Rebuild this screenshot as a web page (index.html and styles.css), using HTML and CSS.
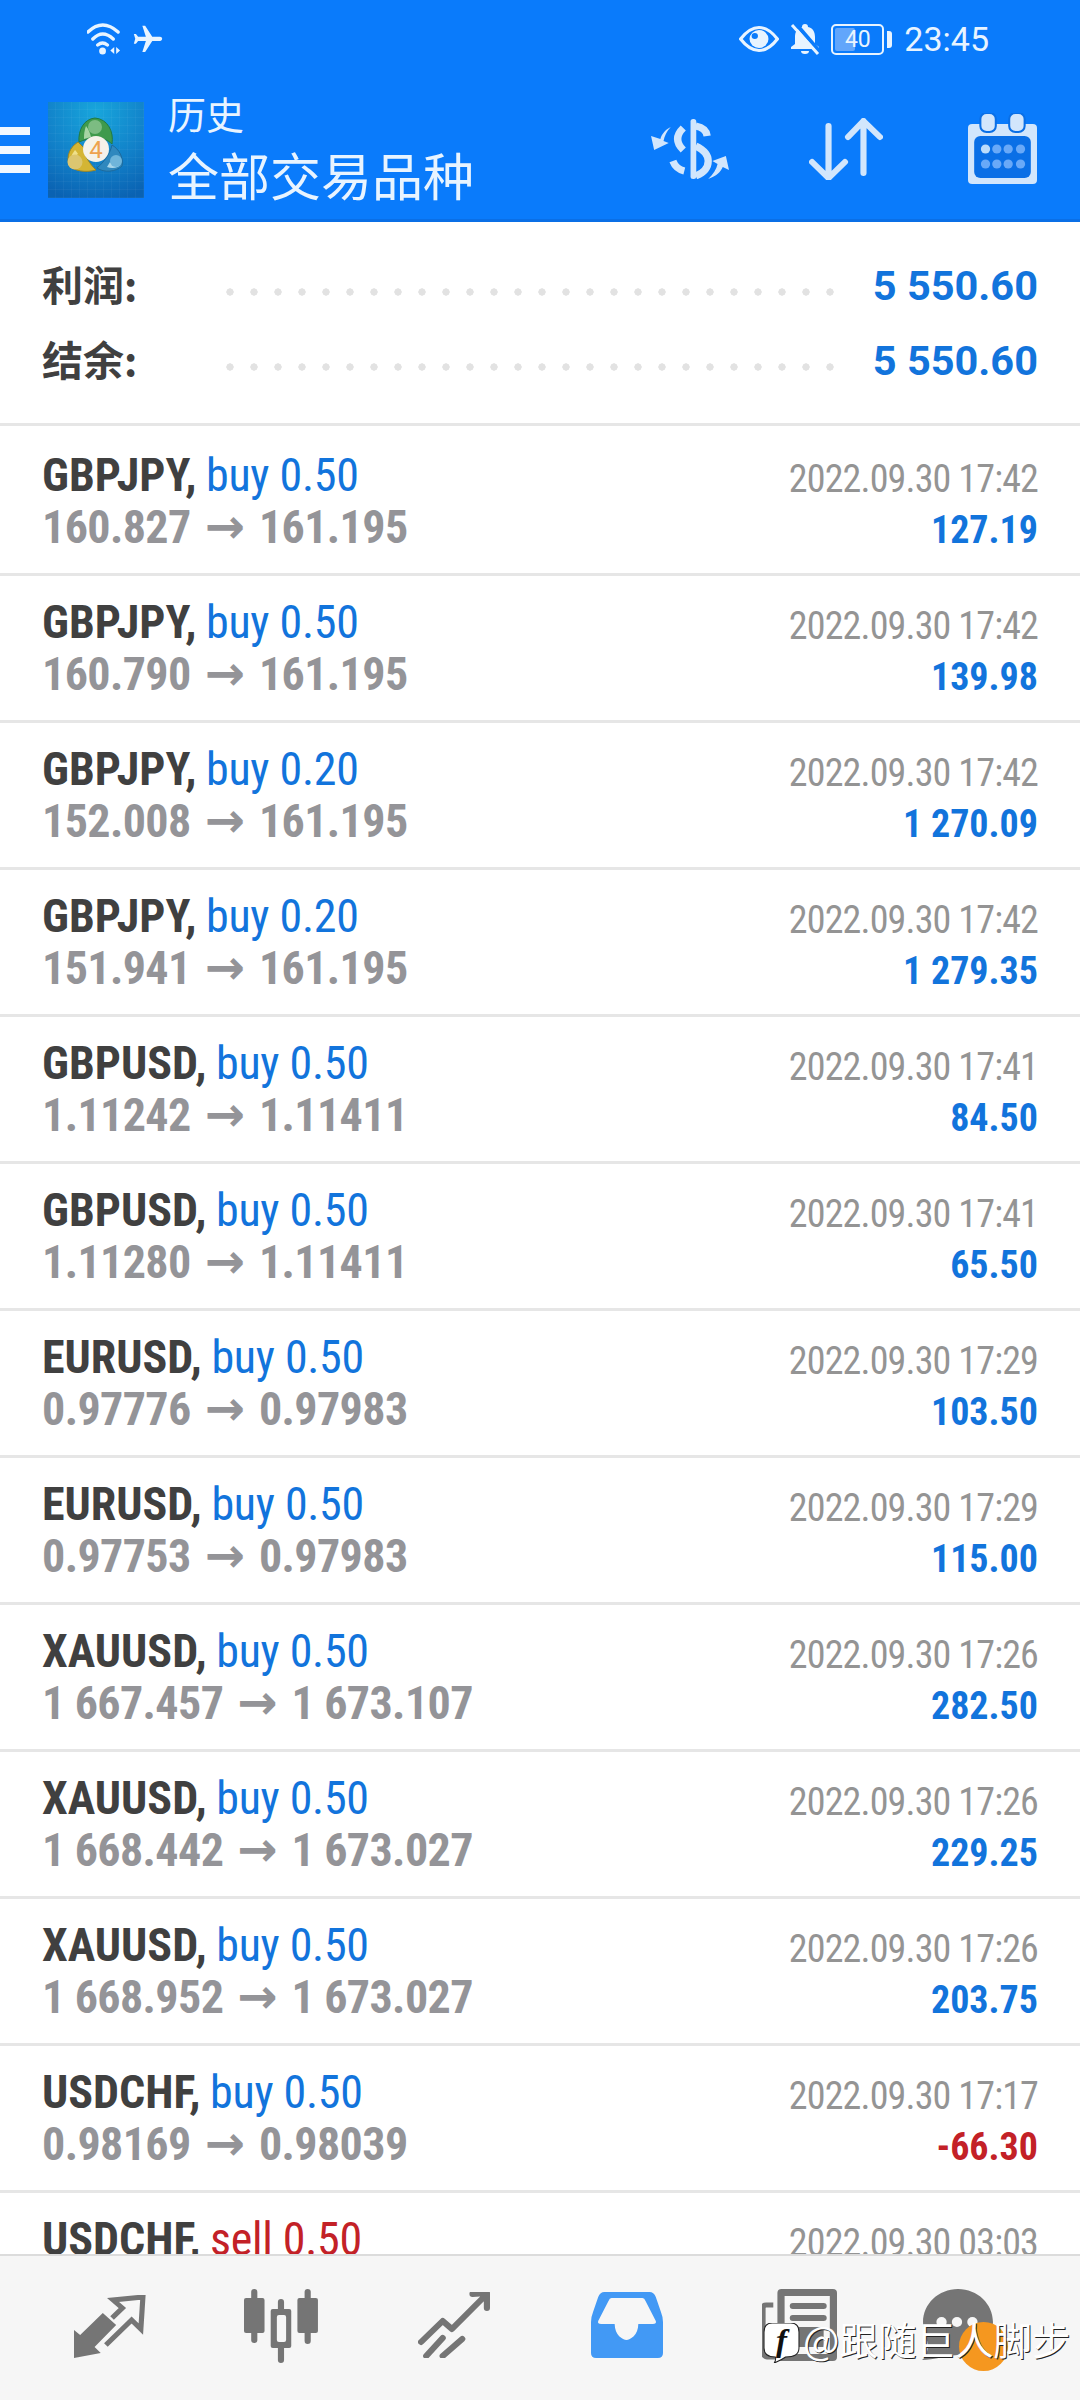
FILE: index.html
```html
<!DOCTYPE html>
<html>
	<head>
		<meta charset="UTF-8">
		<title>历史</title>
		<link rel="stylesheet" href="styles.css">
	</head>
	<body>
		<div class="app">
			<div class="head">
				<div class="status">
					<div class="status-left">
						<svg width="35" height="32" viewBox="0 0 36 32" preserveAspectRatio="none">
							<path d="M1 9Q16-5 32 9M6 16Q16 6 27 16M11 22Q16 18 21 22" fill="none" stroke="#e8f4ff" stroke-width="3.5" stroke-linecap="round"/>
							<circle cx="16" cy="28" r="3.5" fill="#e8f4ff"/>
							<path d="M28 24v7l-4-3.500zM30 24v7l4-3.500z" fill="#e8f4ff"/>
						</svg>
						<svg width="34" height="33" viewBox="0 0 24 24" preserveAspectRatio="none">
							<path transform="rotate(90 12 12)" d="M21 16v-2l-8-5V3.500c0-.83-.67-1.500-1.500-1.500S10 2.670 10 3.500V9l-8 5v2l8-2.500V19l-2 1.500V22l3.500-1 3.500 1v-1.500L13 19v-5.500l8 2.500z" fill="#e8f4ff"/>
						</svg>
					</div>
					<div class="status-right">
						<svg width="40" height="26" viewBox="0 0 38 26" preserveAspectRatio="none">
							<path d="M1.500 13Q10 1.500 19 1.500T36.500 13Q28 24.500 19 24.500T1.500 13Z" fill="none" stroke="#e8f4ff" stroke-width="3"/>
							<circle cx="19" cy="13" r="9" fill="#e8f4ff"/>
							<circle cx="15" cy="10" r="3" fill="#0a7bfb"/>
						</svg>
						<svg width="30" height="32" viewBox="0 0 30 32" preserveAspectRatio="none">
							<path d="M15 1a3 3 0 0 1 3 3c5 1 7 5 7 10v7l4 3v2H1v-2l4-3v-7c0-5 2-9 7-10a3 3 0 0 1 3-3zM11 28h8a4 3 0 0 1-8 0z" fill="#e8f4ff"/>
							<path d="M6 1l24 28" stroke="#0a7bfb" stroke-width="4"/>
							<path d="M2 2l26 29" stroke="#e8f4ff" stroke-width="3"/>
						</svg>
						<div class="battery">
							<div class="battery-body"><span class="battery-fill"></span><span class="battery-num">40</span></div>
							<span class="battery-cap"></span>
						</div>
						<span class="clock">23:45</span>
					</div>
				</div>
				<div class="toolbar">
					<div class="burger"><i></i><i></i><i></i></div>
					<svg class="logo" width="96" height="96" viewBox="0 0 96 96">
						<defs>
							<radialGradient id="lg" cx=".5" cy=".1" r=".95">
								<stop offset="0" stop-color="#18a6dc"/>
								<stop offset=".6" stop-color="#117fc8"/>
								<stop offset="1" stop-color="#0a62b2"/>
							</radialGradient>
							<pattern id="lgrid" width="8" height="8" patternUnits="userSpaceOnUse">
								<path d="M8 0V8H0" fill="none" stroke="#fff" stroke-opacity=".07"/>
							</pattern>
						</defs>
						<rect width="96" height="96" fill="url(#lg)"/>
						<rect width="96" height="96" fill="url(#lgrid)"/>
						<path d="M47 16C36 17 30 28 31 40C36 38 41 36 48 36C54 36 60 38 64 42C66 30 60 17 47 16Z" fill="#3f9a4c" stroke="#1f7a44" stroke-width="1"/>
						<path d="M38 24C36 30 36 33 36 37L43 35C42 31 41 28 38 24Z" fill="#a6d4a4"/>
						<circle cx="47" cy="25" r="7" fill="#7cbc82"/>
						<path d="M30 40C22 45 18 54 21 63C25 69 38 71 48 68C42 62 36 54 36 46Z" fill="#d4b534" stroke="#9a8524" stroke-width="1"/>
						<path d="M27 48C24 52 23 54 24 56L30 52C29 50 28 49 27 48Z" fill="#efe08a"/>
						<circle cx="27" cy="60" r="7.500" fill="#dcc670"/>
						<path d="M64 43C62 52 56 60 49 66C56 71 68 70 74 64C76 56 71 47 64 43Z" fill="#2f88be" stroke="#1d6a9c" stroke-width="1"/>
						<path d="M62 60C66 64 70 64 73 62C71 66 64 67 59 65Z" fill="#a8d6ea"/>
						<circle cx="68" cy="59" r="6" fill="#6fb5da"/>
						<circle cx="48" cy="47" r="13" fill="#f5f2ea"/>
						<text x="48" y="56" class="logo-num">4</text>
					</svg>
					<div class="titles">
						<div class="title-small">历史</div>
						<div class="title-big">全部交易品种</div>
					</div>
					<div class="tools">
						<svg width="79" height="60" viewBox="0 0 76 60" preserveAspectRatio="none">
							<g fill="none" stroke="#d2e6fc" stroke-width="7">
								<path d="M32 9Q21 20 32 31M44 7Q54 9 55 17M44 27Q56 33 56 42Q56 52 44 57M22 42Q25 50 33 52"/>
							</g>
							<rect x="39" y="0" width="5.500" height="60" rx="2.500" fill="#d2e6fc"/>
							<path d="M20 8C14 11 11 16 10 20L1 17L4 31L18 24L13 22C14 17 16 12 20 8ZM56 60C64 57 68 53 70 48L76 51L73 37L60 42L65 45C64 50 61 55 56 60Z" fill="#d2e6fc"/>
						</svg>
						<svg class="tool-arrows" width="74" height="62" viewBox="0 0 72 62" preserveAspectRatio="none">
							<path d="M19 8V60M3 44L19 60L35 44M53 55V3M38 19L53 3L69 19" fill="none" stroke="#d2e6fc" stroke-width="6" stroke-linecap="round" stroke-linejoin="round"/>
						</svg>
						<svg class="tool-cal" width="69" height="71" viewBox="0 0 67 71" preserveAspectRatio="none">
							<rect y="11" width="67" height="60" rx="4" fill="#d2e6fc"/>
							<rect x="6" y="23" width="55" height="42" rx="6" fill="#0a6fe6"/>
							<rect x="12" y="0" width="15" height="19" rx="6" fill="#d2e6fc" stroke="#0a6fe6" stroke-width="2"/>
							<rect x="40" y="0" width="15" height="19" rx="6" fill="#d2e6fc" stroke="#0a6fe6" stroke-width="2"/>
							<g fill="#69a9f8">
								<circle cx="17" cy="36" r="4.500" fill="#bcdcfb"/><circle cx="28" cy="36" r="4.500"/><circle cx="39" cy="36" r="4.500"/><circle cx="51" cy="36" r="4.500"/>
								<circle cx="17" cy="51" r="4.500"/><circle cx="28" cy="51" r="4.500"/><circle cx="39" cy="51" r="4.500"/><circle cx="51" cy="51" r="4.500"/>
							</g>
						</svg>
					</div>
				</div>
			</div>

			<div class="summary">
				<div class="sum-row">
					<span class="sum-label">利润:</span>
					<span class="dots"></span>
					<span class="sum-value">5 550.60</span>
				</div>
				<div class="sum-row">
					<span class="sum-label">结余:</span>
					<span class="dots"></span>
					<span class="sum-value">5 550.60</span>
				</div>
			</div>

			<div class="list">
				<div class="row">
					<div class="row-left"><div class="deal"><b>GBPJPY,</b> <span class="buy">buy 0.50</span></div><div class="price">160.827 <span class="arrow">→</span> 161.195</div></div>
					<div class="row-right"><div class="time">2022.09.30 17:42</div><div class="profit">127.19</div></div>
				</div>
				<div class="row">
					<div class="row-left"><div class="deal"><b>GBPJPY,</b> <span class="buy">buy 0.50</span></div><div class="price">160.790 <span class="arrow">→</span> 161.195</div></div>
					<div class="row-right"><div class="time">2022.09.30 17:42</div><div class="profit">139.98</div></div>
				</div>
				<div class="row">
					<div class="row-left"><div class="deal"><b>GBPJPY,</b> <span class="buy">buy 0.20</span></div><div class="price">152.008 <span class="arrow">→</span> 161.195</div></div>
					<div class="row-right"><div class="time">2022.09.30 17:42</div><div class="profit">1 270.09</div></div>
				</div>
				<div class="row">
					<div class="row-left"><div class="deal"><b>GBPJPY,</b> <span class="buy">buy 0.20</span></div><div class="price">151.941 <span class="arrow">→</span> 161.195</div></div>
					<div class="row-right"><div class="time">2022.09.30 17:42</div><div class="profit">1 279.35</div></div>
				</div>
				<div class="row">
					<div class="row-left"><div class="deal"><b>GBPUSD,</b> <span class="buy">buy 0.50</span></div><div class="price">1.11242 <span class="arrow">→</span> 1.11411</div></div>
					<div class="row-right"><div class="time">2022.09.30 17:41</div><div class="profit">84.50</div></div>
				</div>
				<div class="row">
					<div class="row-left"><div class="deal"><b>GBPUSD,</b> <span class="buy">buy 0.50</span></div><div class="price">1.11280 <span class="arrow">→</span> 1.11411</div></div>
					<div class="row-right"><div class="time">2022.09.30 17:41</div><div class="profit">65.50</div></div>
				</div>
				<div class="row">
					<div class="row-left"><div class="deal"><b>EURUSD,</b> <span class="buy">buy 0.50</span></div><div class="price">0.97776 <span class="arrow">→</span> 0.97983</div></div>
					<div class="row-right"><div class="time">2022.09.30 17:29</div><div class="profit">103.50</div></div>
				</div>
				<div class="row">
					<div class="row-left"><div class="deal"><b>EURUSD,</b> <span class="buy">buy 0.50</span></div><div class="price">0.97753 <span class="arrow">→</span> 0.97983</div></div>
					<div class="row-right"><div class="time">2022.09.30 17:29</div><div class="profit">115.00</div></div>
				</div>
				<div class="row">
					<div class="row-left"><div class="deal"><b>XAUUSD,</b> <span class="buy">buy 0.50</span></div><div class="price">1 667.457 <span class="arrow">→</span> 1 673.107</div></div>
					<div class="row-right"><div class="time">2022.09.30 17:26</div><div class="profit">282.50</div></div>
				</div>
				<div class="row">
					<div class="row-left"><div class="deal"><b>XAUUSD,</b> <span class="buy">buy 0.50</span></div><div class="price">1 668.442 <span class="arrow">→</span> 1 673.027</div></div>
					<div class="row-right"><div class="time">2022.09.30 17:26</div><div class="profit">229.25</div></div>
				</div>
				<div class="row">
					<div class="row-left"><div class="deal"><b>XAUUSD,</b> <span class="buy">buy 0.50</span></div><div class="price">1 668.952 <span class="arrow">→</span> 1 673.027</div></div>
					<div class="row-right"><div class="time">2022.09.30 17:26</div><div class="profit">203.75</div></div>
				</div>
				<div class="row">
					<div class="row-left"><div class="deal"><b>USDCHF,</b> <span class="buy">buy 0.50</span></div><div class="price">0.98169 <span class="arrow">→</span> 0.98039</div></div>
					<div class="row-right"><div class="time">2022.09.30 17:17</div><div class="profit loss">-66.30</div></div>
				</div>
				<div class="row">
					<div class="row-left"><div class="deal"><b>USDCHF,</b> <span class="sell">sell 0.50</span></div></div>
					<div class="row-right"><div class="time">2022.09.30 03:03</div></div>
				</div>
			</div>

			<div class="tabs">
				<svg class="tab tab1" width="72" height="63" viewBox="0 0 70 63" preserveAspectRatio="none">
					<path d="M0 35L6 40L28 18L41 30L20 52L26 58L0 63Z" fill="#757575"/>
					<path d="M37 23L47 13L38 5L67 2L65 34L56 25L31 50" fill="none" stroke="#757575" stroke-width="5"/>
				</svg>
				<svg class="tab tab2" width="76" height="74" viewBox="0 0 74 74" preserveAspectRatio="none">
					<g fill="#757575">
						<rect x="7" y="0" width="6" height="54" rx="3"/>
						<rect x="0" y="9" width="20" height="35" rx="2"/>
						<rect x="59" y="0" width="6" height="55" rx="3"/>
						<rect x="52" y="9" width="20" height="35" rx="2"/>
						<rect x="33" y="10" width="6" height="64" rx="3"/>
						<rect x="26" y="20" width="20" height="39" rx="2"/>
					</g>
					<rect x="32" y="26" width="9" height="27" rx="2" fill="#f6f6f6"/>
				</svg>
				<svg class="tab tab3" width="72" height="66" viewBox="0 0 70 66" preserveAspectRatio="none">
					<path d="M3 50L24 29L33 37L66 3M53 2L67 1L67 16M8 64L24 46M24 64L43 47" fill="none" stroke="#757575" stroke-width="6" stroke-linecap="round" stroke-linejoin="round"/>
				</svg>
				<svg class="tab tab4" width="72" height="66" viewBox="0 0 70 66" preserveAspectRatio="none">
					<path d="M13 0H57Q61 0 63 5L68 20Q70 25 70 30V61Q70 66 65 66H5Q0 66 0 61V30Q0 25 2 20L7 5Q9 0 13 0Z" fill="#4299f5"/>
					<path d="M20 6H50Q52 6 53 9L63 29Q64 32 60 32H46C46 43 38 48 34.500 48C31 48 23 43 23 32H10Q6 32 7 29L17 9Q18 6 20 6Z" fill="#f6f6f6"/>
				</svg>
				<svg class="tab tab5" width="75" height="72" viewBox="0 0 73 72" preserveAspectRatio="none">
					<path d="M19 0H69Q73 0 73 4V68Q73 72 69 72H19Q15 72 15 68V4Q15 0 19 0Z" fill="#757575"/>
					<rect x="22" y="7" width="44" height="58" fill="#f6f6f6"/>
					<path d="M30 17H60M30 29H60" stroke="#757575" stroke-width="6" stroke-linecap="round"/>
					<rect x="28" y="38" width="32" height="20" fill="#757575"/>
					<path d="M11 16H4Q1 16 1 19V62Q1 68 7 68H15" fill="none" stroke="#757575" stroke-width="5"/>
				</svg>
				<svg class="tab tab6" width="72" height="71" viewBox="0 0 70 71" preserveAspectRatio="none">
					<path d="M35 0C54 0 69 15 69 33C69 52 54 66 35 66C28 66 10 71 0 71C4 68 7 60 5 52C2 46 1 40 1 33C1 15 16 0 35 0Z" fill="#757575"/>
					<circle cx="19" cy="33" r="5" fill="#f6f6f6"/><circle cx="34" cy="33" r="5" fill="#f6f6f6"/><circle cx="49" cy="33" r="5" fill="#f6f6f6"/>
				</svg>
				<span class="orange-dot"></span>
				<div class="mark">
					<svg class="mark-icon" width="37" height="40" viewBox="0 0 36 40" preserveAspectRatio="none">
						<path d="M9 0H27Q35 0 35 9V25Q35 34 22 34Q18 37 11 40Q13 36 12 34Q1 34 1 25V9Q1 0 9 0Z" fill="#fff" stroke="#222" stroke-width="1"/>
						<text x="18" y="28" class="mark-f">f</text>
					</svg>
					<span class="mark-text">@跟随巨人脚步</span>
				</div>
			</div>
		</div>
	</body>
</html>
```

FILE: styles.css
```css
*{margin: 0;padding: 0;box-sizing: border-box;}
body{background: #fff;font-family: Roboto, "Noto Sans CJK SC", sans-serif;}
.app{width: 1080px;height: 2400px;display: flex;flex-direction: column;overflow: hidden;}

.head{height: 222px;background: #0a7bfb;border-bottom: 3px solid #0a6fe6;flex: none;color: #e8f4ff;}
.status{height: 78px;display: flex;justify-content: space-between;align-items: center;padding: 0 91px 0 87px;}
.status-left{display: flex;align-items: center;gap: 9px;}
.status-right{display: flex;align-items: center;gap: 11px;}
.battery{display: flex;align-items: center;gap: 3px;}
.battery-body{width: 53px;height: 31px;border: 2.5px solid #e8f4ff;border-radius: 5px;position: relative;display: flex;align-items: center;justify-content: center;}
.battery-fill{position: absolute;left: 2px;top: 2px;bottom: 2px;width: 20px;background: #62a6fb;border-radius: 2px;}
.battery-num{position: relative;font-size: 23px;line-height: 1;}
.battery-cap{width: 5px;height: 17px;background: #e8f4ff;border-radius: 0 3px 3px 0;}
.clock{font-size: 34px;margin-left: 1px;}

.toolbar{height: 141px;display: flex;align-items: center;}
.burger{width: 30px;display: flex;flex-direction: column;gap: 11px;margin-right: 18px;margin-top: 3px;}
.burger i{display: block;height: 8px;background: #f0f7ff;}
.logo{flex: none;margin-top: 3px;}
.logo-num{font-size: 24px;font-family: Roboto, sans-serif;fill: #eea24f;text-anchor: middle;}
.titles{margin-left: 24px;font-family: "Noto Sans CJK SC", sans-serif;}
.title-small{font-size: 38px;line-height: 42px;}
.title-big{font-size: 51px;line-height: 62px;margin-top: 9px;}
.tools{margin-left: auto;padding-right: 43px;display: flex;align-items: center;}
.tool-arrows{margin-left: 80px;}
.tool-cal{margin-left: 85px;}

.summary{height: 204px;flex: none;padding: 26px 42px 0;border-bottom: 3px solid #e6e6e6;}
.sum-row{height: 75px;display: flex;align-items: center;}
.sum-label{width: 184px;font-family: "Noto Sans CJK SC", sans-serif;font-weight: 700;font-size: 41px;color: #404040;margin-top: -5px;}
.dots{flex: 1;height: 8px;margin-top: 13px;margin-right: 39px;background: radial-gradient(circle at 4px 4px, #e2e2e2 3.4px, transparent 3.9px) 0 0 / 24px 8px repeat-x;}
.sum-value{font-weight: 700;font-size: 41.5px;color: #1274dc;}

.list{flex: 1;overflow: hidden;padding-top: 3px;}
.row{height: 147px;padding: 20px 42px 0;border-bottom: 3px solid #e6e6e6;display: flex;justify-content: space-between;font-stretch: 75%;}
.deal{font-size: 46px;line-height: 52px;}
.deal b{color: #404040;margin-right: -1px;}
.buy{color: #1274dc;letter-spacing: -.3px;}
.sell{color: #c32127;letter-spacing: -.3px;}
.price{font-size: 46px;line-height: 52px;font-weight: 700;color: #949498;letter-spacing: -.6px;}
.arrow{font-family: "DejaVu Sans", sans-serif;font-stretch: normal;font-size: 48px;line-height: 1;padding: 0 4px;letter-spacing: 0;}
.row-right{text-align: right;padding-top: 5px;}
.time{font-size: 38px;line-height: 51px;color: #949494;letter-spacing: -.85px;}
.profit{font-size: 38px;line-height: 51px;font-weight: 700;color: #1274dc;}
.loss{color: #c32127;}

.tabs{height: 146px;flex: none;background: #f6f6f6;border-top: 2px solid #dcdcdc;position: relative;display: flex;align-items: flex-start;padding: 33px 0 0 74px;}
.tab{flex: none;}
.tab1{margin-top: 6px;}
.tab2{margin-left: 98px;}
.tab3{margin-left: 98px;margin-top: 3px;}
.tab4{margin-left: 101px;margin-top: 3px;}
.tab5{margin-left: 99px;}
.tab6{margin-left: 85px;}
.orange-dot{position: absolute;left: 959px;top: 66px;width: 49px;height: 49px;border-radius: 50%;background: #f5971f;}
.mark{position: absolute;left: 763px;top: 62px;display: flex;align-items: flex-start;gap: 3px;}
.mark-icon{margin-top: 5px;}
.mark-f{font-family: "Liberation Serif", serif;font-style: italic;font-weight: 700;font-size: 32px;fill: #111;text-anchor: middle;}
.mark-text{font-family: "Noto Sans CJK SC", sans-serif;font-size: 38.5px;line-height: 40px;color: #fff;white-space: nowrap;text-shadow: 1px 1px 0 #222;}
```
